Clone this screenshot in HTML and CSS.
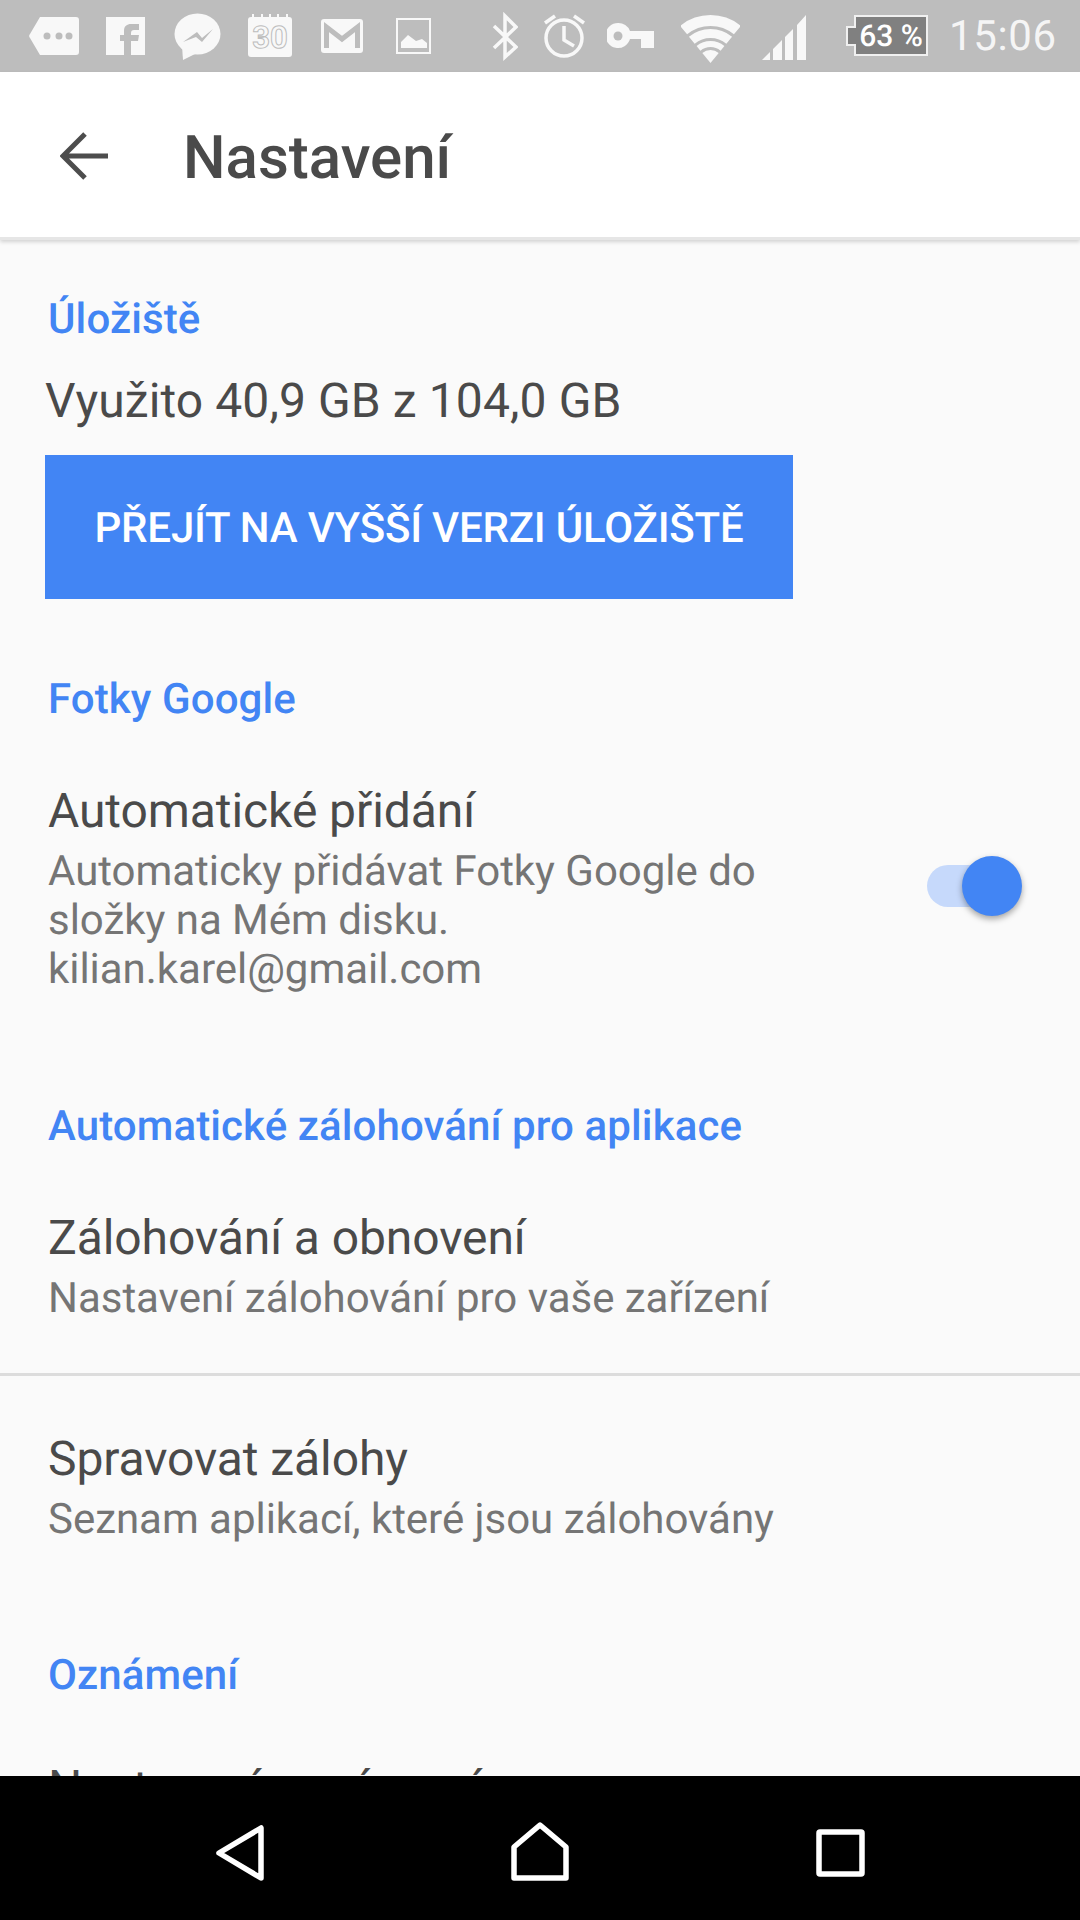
FILE: index.html
```html
<!DOCTYPE html>
<html>
<head>
    <title>Nastavení</title>
    <link rel="stylesheet" href="styles.css">
</head>
<body>
<div class="screen">
    <div class="status-bar">
        <svg class="st-tag" viewBox="0 0 50 72"><path class="ico-fill" d="M11 17H47a3 3 0 0 1 3 3V52a3 3 0 0 1-3 3H11L1 38a3 3 0 0 1 0-4Z"/><circle class="ico-cut" cx="18" cy="36" r="3.5"/><circle class="ico-cut" cx="30" cy="36" r="3.5"/><circle class="ico-cut" cx="40" cy="36" r="3.5"/></svg>
        <svg class="st-fb" viewBox="0 0 39 72"><rect class="ico-fill" y="17" width="39" height="38"/><path class="ico-cut" d="M18 55V41H14V35H18V31C18 26 21 24 25 24H33V30H28C26 30 25 31 25 33V35H33L32 41H25V55Z"/></svg>
        <svg class="st-msg" viewBox="0 0 47 72"><ellipse class="ico-fill" cx="23.5" cy="34" rx="23" ry="20.5"/><path class="ico-fill" d="M8 46L9 60L23 53Z"/><path class="ico-cut" d="M9 42L23 32L28 38L39 29L28 42L22 37Z"/></svg>
        <svg class="st-cal" viewBox="0 0 44 72"><rect class="ico-fill" y="17" width="44" height="40" rx="3"/><rect class="ico-fill" x="4" y="14" width="2" height="4"/><rect class="ico-fill" x="13" y="14" width="2" height="4"/><rect class="ico-fill" x="21" y="14" width="2" height="4"/><rect class="ico-fill" x="29" y="14" width="2" height="4"/><rect class="ico-fill" x="38" y="14" width="2" height="4"/><text class="cal-day" x="22" y="48">30</text></svg>
        <svg class="st-mail" viewBox="0 0 42 72"><rect class="ico-fill" y="19" width="42" height="34" rx="3"/><path class="ico-cutline" d="M5.5 48V27L21 39L36.5 27V48"/></svg>
        <svg class="st-img" viewBox="0 0 35 72"><rect class="ico-line" x="1" y="19" width="33" height="34"/><path class="ico-fill" d="M5 48V42L12 35L20 41L26 39L31 43V48Z"/></svg>
        <svg class="st-bt" viewBox="0 0 26 72"><path class="ico-line" d="M2 26L24 47L13 57V16L24 27L2 48"/></svg>
        <svg class="st-alarm" viewBox="0 0 42 72"><circle class="ico-line" cx="21" cy="38" r="18"/><path class="ico-line" d="M21 26V40L31 46M2 23L12 16M31 16L41 23"/></svg>
        <svg class="st-key" viewBox="0 0 47 72"><path class="ico-fill" d="M11 23a12.500 12.500 0 0 1 12 8H47V48H34V39H23A12.500 12.500 0 1 1 11 23Z"/><circle class="ico-cut" cx="11" cy="36" r="4.500"/></svg>
        <svg class="st-wifi" viewBox="0 0 59 72"><path class="wifi-a" d="M2.600 30.100A42.500 42.500 0 0 1 56.400 30.100"/><path class="wifi-b" d="M10.800 40.200A29.500 29.500 0 0 1 48.200 40.200"/><path class="wifi-c" d="M17.500 48.300A19 19 0 0 1 41.500 48.300"/><path class="ico-fill" d="M29.500 63L21.300 52.900A13 13 0 0 1 37.700 52.900Z"/></svg>
        <svg class="st-signal" viewBox="0 0 45 72"><path class="ico-fill" d="M1 60L9 52V60ZM12 49L21 40V60H12ZM24 37L32 29V60H24ZM36 25L45 15V60H36Z"/></svg>
        <svg class="st-batt" viewBox="0 0 82 72"><path class="batt-body" d="M9 16H81V55H9V45H1V27H9Z"/><text class="batt-text" x="45" y="46">63 %</text></svg>
        <span class="clock">15:06</span>
    </div>

    <div class="app-bar">
        <svg class="back-arrow" viewBox="0 0 48 48"><path d="M2 24H48M25 2L3 24L25 46"/></svg>
        <div class="app-title">Nastavení</div>
    </div>

    <div class="content">
        <div class="section-title first">Úložiště</div>
        <div class="usage">Využito 40,9 GB z 104,0 GB</div>
        <div class="upgrade-btn">PŘEJÍT NA VYŠŠÍ VERZI ÚLOŽIŠTĚ</div>

        <div class="section-title photos">Fotky Google</div>
        <div class="item auto-add">
            <div>
                <div class="item-title">Automatické přidání</div>
                <div class="item-sub">Automaticky přidávat Fotky Google do<br>složky na Mém disku.<br>kilian.karel@gmail.com</div>
            </div>
            <div class="toggle"><div class="toggle-thumb"></div></div>
        </div>

        <div class="section-title backup">Automatické zálohování pro aplikace</div>
        <div class="item backup-item">
            <div>
                <div class="item-title">Zálohování a obnovení</div>
                <div class="item-sub">Nastavení zálohování pro vaše zařízení</div>
            </div>
        </div>
        <div class="divider"></div>
        <div class="item manage-item">
            <div>
                <div class="item-title">Spravovat zálohy</div>
                <div class="item-sub">Seznam aplikací, které jsou zálohovány</div>
            </div>
        </div>

        <div class="section-title notify">Oznámení</div>
        <div class="item notify-item">
            <div>
                <div class="item-title">Nastavení oznámení</div>
            </div>
        </div>
    </div>

    <div class="nav-bar">
        <svg class="nav-back" viewBox="0 0 50 144"><path d="M46 52V102L4 77Z"/></svg>
        <svg class="nav-home" viewBox="0 0 58 144"><path d="M3 102V71L29 49L55 71V102Z"/></svg>
        <svg class="nav-recent" viewBox="0 0 49 144"><rect x="3" y="56" width="43" height="42" rx="1"/></svg>
    </div>
</div>
</body>
</html>
```
FILE: styles.css
```css
body {
    margin: 0;
    font-family: Roboto, "Liberation Sans", sans-serif;
    text-rendering: geometricPrecision;
    background: #fafafa;
}
.screen {
    width: 1080px;
    height: 1920px;
    display: flex;
    flex-direction: column;
    overflow: hidden;
}

/* status bar */
.status-bar {
    height: 72px;
    flex: none;
    display: flex;
    align-items: center;
    padding-left: 29px;
    background: #bdbdbd;
}
.status-bar svg {
    height: 72px;
    flex: none;
}
.st-tag { width: 50px; }
.st-fb { width: 39px; margin-left: 27px; }
.st-msg { width: 47px; margin-left: 29px; }
.st-cal { width: 44px; margin-left: 27px; }
.st-mail { width: 42px; margin-left: 29px; }
.st-img { width: 35px; margin-left: 33px; }
.st-bt { width: 26px; margin-left: 61px; }
.st-alarm { width: 42px; margin-left: 25px; }
.st-key { width: 47px; margin-left: 22px; }
.st-wifi { width: 59px; margin-left: 27px; }
.st-signal { width: 45px; margin-left: 21px; }
.st-batt { width: 82px; margin-left: 40px; }
.ico-fill { fill: #f8f8f8; }
.ico-cut { fill: #bdbdbd; }
.ico-cutline {
    fill: none;
    stroke: #bdbdbd;
    stroke-width: 5;
}
.ico-line {
    fill: none;
    stroke: #f8f8f8;
    stroke-width: 3.5;
}
.st-img .ico-line { stroke-width: 2; }
.cal-day {
    font-size: 31px;
    font-weight: 700;
    text-anchor: middle;
    fill: #f8f8f8;
    stroke: #bdbdbd;
    stroke-width: 1;
}
.wifi-a, .wifi-b, .wifi-c {
    fill: none;
    stroke: #f8f8f8;
}
.wifi-a { stroke-width: 11; }
.wifi-b { stroke-width: 9; }
.wifi-c { stroke-width: 6; }
.batt-body {
    fill: #808080;
    stroke: #f0f0f0;
    stroke-width: 2;
}
.batt-text {
    font-size: 30px;
    font-weight: 500;
    text-anchor: middle;
    fill: #ffffff;
}
.clock {
    margin-left: 21px;
    font-size: 42px;
    letter-spacing: 0.6px;
    color: #f5f5f5;
}

/* app bar */
.app-bar {
    height: 165px;
    flex: none;
    display: flex;
    align-items: center;
    padding-left: 60px;
    background: #ffffff;
    border-bottom: 3px solid #e6e6e6;
    box-shadow: 0 2px 4px rgba(0,0,0,0.16);
    position: relative;
}
.back-arrow {
    width: 48px;
    height: 48px;
    margin-top: 3px;
    fill: none;
    stroke: #4d4d4d;
    stroke-width: 5;
}
.app-title {
    margin-left: 75px;
    margin-top: 5px;
    font-size: 60px;
    font-weight: 500;
    color: #4a4a4a;
}

/* settings list */
.content {
    flex: 1;
    min-height: 0;
    overflow: hidden;
    background: #fafafa;
}
.section-title {
    padding-left: 48px;
    font-size: 42px;
    font-weight: 500;
    line-height: 58px;
    letter-spacing: 0.1px;
    color: #4285f4;
}
.section-title.first { margin-top: 51px; }
.section-title.photos { margin-top: 72px; }
.section-title.backup { margin-top: 104px; }
.section-title.notify { margin-top: 103px; }
.usage {
    margin: 20px 0 0 45px;
    font-size: 48px;
    line-height: 64px;
    letter-spacing: 0.1px;
    color: #4a4a4a;
}
.upgrade-btn {
    width: 748px;
    height: 142px;
    padding-top: 2px;
    margin: 22px 0 0 45px;
    display: flex;
    align-items: center;
    justify-content: center;
    background: #4285f4;
    color: #ffffff;
    font-size: 42px;
    font-weight: 500;
    letter-spacing: -0.2px;
}
.item {
    display: flex;
    align-items: center;
    justify-content: space-between;
    padding: 0 72px 0 48px;
}
.auto-add { margin-top: 54px; }
.backup-item { margin-top: 54px; }
.manage-item { margin-top: 55px; }
.notify-item { margin-top: 55px; }
.item-title {
    font-size: 48px;
    line-height: 56px;
    letter-spacing: -0.08px;
    color: #4a4a4a;
}
.item-sub {
    margin-top: 8px;
    font-size: 42px;
    line-height: 49px;
    letter-spacing: -0.03px;
    color: #757575;
}
.divider {
    height: 3px;
    margin-top: 50px;
    background: #dcdcdc;
}
.toggle {
    position: relative;
    width: 81px;
    height: 42px;
    margin-bottom: 5px;
    border-radius: 21px;
    background: #c6d9fb;
}
.toggle-thumb {
    position: absolute;
    top: -9px;
    right: -14px;
    width: 60px;
    height: 60px;
    border-radius: 50%;
    background: #4285f4;
    box-shadow: 0 3px 6px rgba(0,0,0,0.35);
}

/* nav bar */
.nav-bar {
    height: 144px;
    flex: none;
    display: flex;
    padding-left: 215px;
    background: #000000;
}
.nav-bar svg {
    height: 144px;
    fill: none;
    stroke: #ffffff;
    stroke-width: 5.5;
    stroke-linejoin: round;
}
.nav-back { width: 50px; }
.nav-home { width: 58px; margin-left: 246px; }
.nav-recent { width: 49px; margin-left: 247px; }
```
